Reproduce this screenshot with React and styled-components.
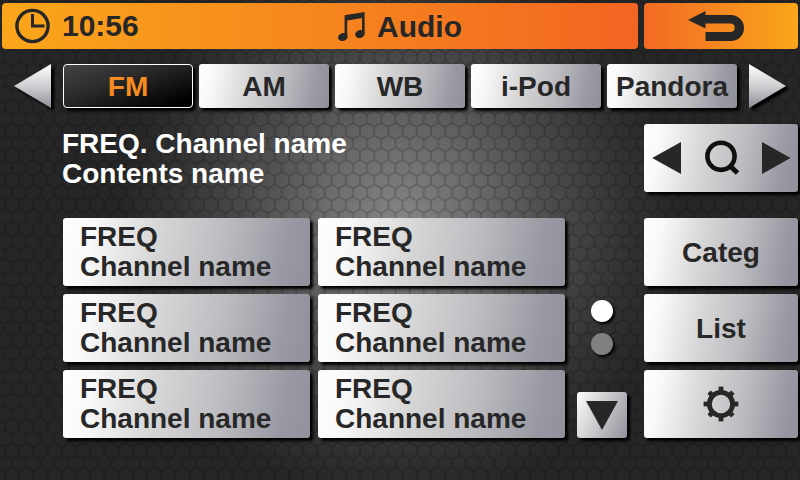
import React, { useState } from "react";
import styled, { createGlobalStyle, css } from "styled-components";

const INK = "#272727";

const GlobalStyle = createGlobalStyle`
  *, *::before, *::after { box-sizing: border-box; }
  body {
    margin: 0;
    background: #242424;
    font-family: "Liberation Sans", Arial, sans-serif;
    font-weight: bold;
  }
  button { font: inherit; color: inherit; border: 0; padding: 0; cursor: pointer; }
  h1, p { margin: 0; font-size: inherit; }
`;

const Screen = styled.div`
  position: relative;
  isolation: isolate;
  min-height: 100vh;
  padding: 3px 2px;
  overflow: hidden;
  color: ${INK};
  font-size: 28px;
  line-height: 30px;
  background: radial-gradient(circle 280px at 50% 46%, #858585 0%, #6e6e6e 25%, #4b4b4b 55%, #323232 82%, #262626 100%);
`;

const Texture = styled.svg`
  position: absolute;
  inset: 0;
  z-index: -1;
  width: 100%;
  height: 100%;
`;

const metal = css`
  background: linear-gradient(100deg, #fefefe 0%, #f8f8f8 12%, #d6d6d7 38%, #bcbbc0 64%, #9999a3 88%, #91919b 100%);
  border-radius: 3px;
  box-shadow: 3px 3px 3px #000000;
`;

const Header = styled.header`
  display: grid;
  grid-template-columns: 1fr 154px;
  gap: 6px;
  height: 46px;
`;

const TitleBar = styled.div`
  display: grid;
  grid-template-columns: 1fr auto 1fr;
  align-items: center;
  padding: 0 12px;
  border-radius: 4px;
  font-size: 30px;
  background: linear-gradient(90deg, #faa61a, #f26522);
`;

const Clock = styled.div`
  display: flex;
  align-items: center;
  gap: 12px;
`;

/* The left padding balances the back button, so the title sits mid-screen. */
const Title = styled.h1`
  display: flex;
  align-items: center;
  gap: 11px;
  padding-top: 2px;
  padding-left: 160px;
`;

const BackButton = styled.button`
  display: flex;
  align-items: center;
  justify-content: center;
  padding-right: 10px;
  border-radius: 4px;
  background: linear-gradient(90deg, #f26a24, #faa61a);
`;

const TabRow = styled.nav`
  display: flex;
  gap: 12px;
  margin-top: 15px;
  padding: 0 12px;
`;

const TabArrow = styled.button`
  display: flex;
  flex: none;
  width: 37px;
  height: 44px;
  background: none;
  filter: drop-shadow(3px 3px 1px #000000);
`;

const Tabs = styled.div`
  display: grid;
  flex: 1;
  grid-template-columns: repeat(5, minmax(0, 1fr));
  gap: 6px;
`;

const Tab = styled.button`
  height: 44px;
  padding-top: 2px;
  ${metal}
  ${({ $active }) =>
    $active &&
    css`
      color: #f68b1f;
      border: 1px solid #ffffff;
      border-radius: 4px;
      background: linear-gradient(160deg, #444444 0%, #2a2a2a 40%, #000000 90%);
    `}
`;

const NowPlaying = styled.section`
  display: flex;
  justify-content: space-between;
  margin-top: 16px;
  padding-left: 60px;
`;

const Info = styled.div`
  padding-top: 5px;
  color: #ffffff;
`;

const SeekPanel = styled.div`
  display: grid;
  grid-template-columns: 1fr 1fr 1fr;
  width: 154px;
  height: 68px;
  ${metal}
`;

const SeekButton = styled.button`
  display: flex;
  align-items: center;
  justify-content: ${({ $align }) => $align};
  padding: 0 7px;
  background: none;
`;

const Body = styled.main`
  display: flex;
  margin-top: 26px;
  padding-left: 61px;
`;

const Stations = styled.div`
  flex: 1;
  display: grid;
  grid-template-columns: 1fr 1fr;
  grid-auto-rows: 68px;
  gap: 8px;
`;

const Station = styled.button`
  padding: 0 17px;
  text-align: left;
  ${metal}
`;

const Line = styled.span`
  display: block;
`;

const Pager = styled.div`
  display: flex;
  flex-direction: column;
  align-items: center;
  justify-content: flex-end;
  width: 50px;
  margin: 0 17px 0 12px;
`;

const Dot = styled.span`
  width: 22px;
  height: 22px;
  margin-bottom: 11px;
  border-radius: 50%;
  background: ${({ $on }) => ($on ? "#ffffff" : "#808080")};
  box-shadow: 2px 2px 3px #000000;
`;

const PageDown = styled.button`
  display: flex;
  align-items: center;
  justify-content: center;
  width: 50px;
  height: 46px;
  margin-top: 26px;
  ${metal}
  background: linear-gradient(115deg, #fefefe 0%, #e2e2e3 25%, #bdbcc1 60%, #91919b 100%);
`;

const SideMenu = styled.div`
  display: grid;
  grid-auto-rows: 68px;
  gap: 8px;
  width: 154px;
`;

const SideButton = styled.button`
  display: flex;
  align-items: center;
  justify-content: center;
  ${metal}
`;

const SideLabel = styled.span`
  padding-top: 2px;
`;

function HexTexture() {
  return (
    <Texture aria-hidden="true">
      <defs>
        <pattern id="hex" width="14.2" height="24.6" x="5" y="4" patternUnits="userSpaceOnUse">
          <path
            d="M0 0V8.2L7.1 12.3L14.2 8.2V0M7.1 12.3V20.5L0 24.6M7.1 20.5L14.2 24.6"
            fill="none"
            stroke="#000"
            strokeOpacity="0.2"
            strokeWidth="1.6"
          />
        </pattern>
      </defs>
      <rect width="100%" height="100%" fill="url(#hex)" />
    </Texture>
  );
}

function ClockIcon() {
  return (
    <svg width="36" height="36" viewBox="0 0 36 36" fill="none" stroke={INK} strokeWidth="3.4" aria-hidden="true">
      <circle cx="18.5" cy="18" r="15.6" />
      <path d="M18.5 6v12h12" strokeWidth="3" />
    </svg>
  );
}

function NoteIcon() {
  return (
    <svg width="28" height="30" viewBox="0 0 28 30" fill={INK} aria-hidden="true">
      <path d="M6.6 3.2L26.6 0V21H24V6L9.2 8.4V24H6.6Z" />
      <ellipse cx="4.9" cy="25" rx="4.9" ry="3.9" transform="rotate(-20 4.9 25)" />
      <ellipse cx="22" cy="22" rx="4.9" ry="3.9" transform="rotate(-20 22 22)" />
    </svg>
  );
}

function BackIcon() {
  return (
    <svg width="56" height="30" viewBox="0 0 56 30" fill={INK} aria-hidden="true">
      <path d="M0 9L17.5 0V4H43A13 13 0 0 1 43 30H17.5V21H43A4.3 4.3 0 0 0 43 12.5H17.5V17.5Z" />
    </svg>
  );
}

function Arrow({ flip }) {
  const id = flip ? "arrowNext" : "arrowPrev";
  return (
    <svg width="37" height="44" viewBox="0 0 37 44" aria-hidden="true">
      <linearGradient id={id} x1="0" y1="0" x2="0" y2="1">
        <stop offset="0" stopColor="#ffffff" />
        <stop offset="0.5" stopColor="#cfcfd2" />
        <stop offset="1" stopColor="#8e8e99" />
      </linearGradient>
      <path d={flip ? "M0 0L37 22L0 44Z" : "M37 0L0 22L37 44Z"} fill={`url(#${id})`} />
    </svg>
  );
}

function SeekArrow({ flip }) {
  return (
    <svg width="30" height="32" viewBox="0 0 30 32" fill={INK} aria-hidden="true">
      <path d={flip ? "M1 0L29.5 16L1 32Z" : "M30 0L1.2 16L30 32Z"} />
    </svg>
  );
}

function SearchIcon() {
  return (
    <svg width="36" height="36" viewBox="0 0 36 36" fill="none" stroke="#101010" aria-hidden="true">
      <circle cx="18" cy="16.3" r="13.6" strokeWidth="4.6" />
      <path d="M26.5 25.5L34.5 33" strokeWidth="5" />
    </svg>
  );
}

function GearIcon() {
  return (
    <svg width="36" height="36" viewBox="-18 -18 36 36" fill={INK} aria-hidden="true">
      <circle r="11.6" fill="none" stroke={INK} strokeWidth="4.8" />
      {[0, 45, 90, 135, 180, 225, 270, 315].map((a) => (
        <rect key={a} x="-2.4" y={a % 90 ? -16.8 : -17.4} width="4.8" height="5.4" transform={`rotate(${a})`} />
      ))}
    </svg>
  );
}

const TABS = ["FM", "AM", "WB", "i-Pod", "Pandora"];
const STATIONS = Array.from({ length: 6 }, (_, i) => ({ id: i, freq: "FREQ", name: "Channel name" }));

export default function App() {
  const [tab, setTab] = useState("FM");
  return (
    <>
      <GlobalStyle />
      <Screen>
        <HexTexture />
        <Header>
          <TitleBar>
            <Clock>
              <ClockIcon />
              <time>10:56</time>
            </Clock>
            <Title>
              <NoteIcon />
              Audio
            </Title>
          </TitleBar>
          <BackButton aria-label="Back">
            <BackIcon />
          </BackButton>
        </Header>
        <TabRow>
          <TabArrow aria-label="Previous sources">
            <Arrow />
          </TabArrow>
          <Tabs>
            {TABS.map((name) => (
              <Tab key={name} $active={name === tab} aria-pressed={name === tab} onClick={() => setTab(name)}>
                {name}
              </Tab>
            ))}
          </Tabs>
          <TabArrow aria-label="Next sources">
            <Arrow flip />
          </TabArrow>
        </TabRow>
        <NowPlaying>
          <Info>
            <p>FREQ. Channel name</p>
            <p>Contents name</p>
          </Info>
          <SeekPanel>
            <SeekButton $align="flex-start" aria-label="Seek down">
              <SeekArrow />
            </SeekButton>
            <SeekButton $align="center" aria-label="Search">
              <SearchIcon />
            </SeekButton>
            <SeekButton $align="flex-end" aria-label="Seek up">
              <SeekArrow flip />
            </SeekButton>
          </SeekPanel>
        </NowPlaying>
        <Body>
          <Stations>
            {STATIONS.map((s) => (
              <Station key={s.id}>
                <Line>{s.freq}</Line>
                <Line>{s.name}</Line>
              </Station>
            ))}
          </Stations>
          <Pager>
            <Dot $on />
            <Dot />
            <PageDown aria-label="Next page">
              <svg width="32" height="29" viewBox="0 0 32 29" fill={INK} aria-hidden="true">
                <path d="M0 0H32L16 29Z" />
              </svg>
            </PageDown>
          </Pager>
          <SideMenu>
            <SideButton>
              <SideLabel>Categ</SideLabel>
            </SideButton>
            <SideButton>
              <SideLabel>List</SideLabel>
            </SideButton>
            <SideButton aria-label="Settings">
              <GearIcon />
            </SideButton>
          </SideMenu>
        </Body>
      </Screen>
    </>
  );
}
